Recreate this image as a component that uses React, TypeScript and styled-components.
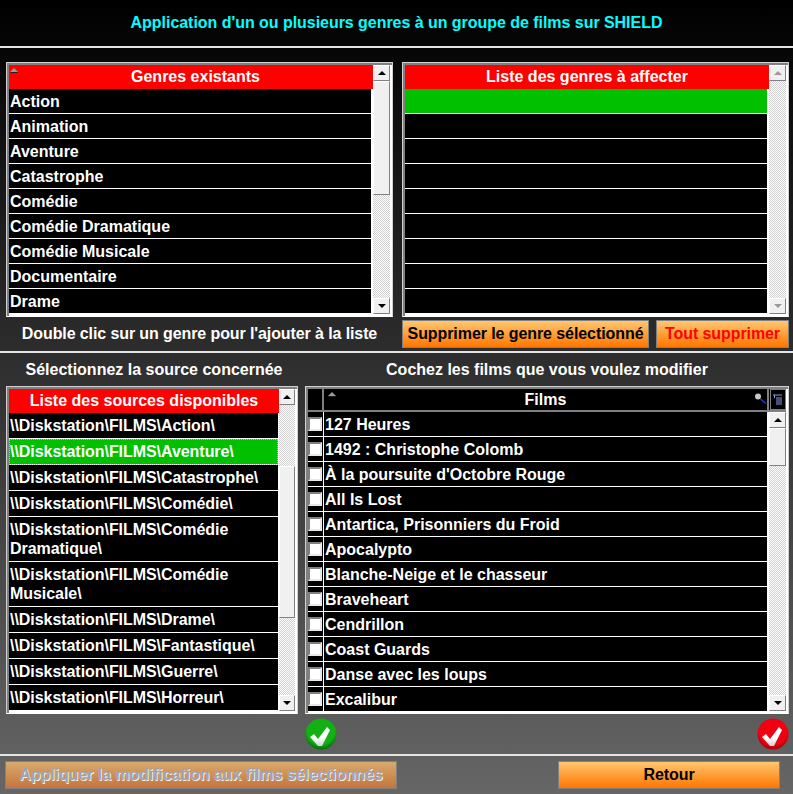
import * as React from 'react';
import styled, { createGlobalStyle } from 'styled-components';

const GlobalStyle = createGlobalStyle`
  html, body {
    margin: 0;
    padding: 0;
    background: #000;
  }
  * {
    box-sizing: border-box;
  }
`;

const Page = styled.div`
  width: 793px;
  height: 794px;
  overflow: hidden;
  background: linear-gradient(to bottom, #000 0%, #666 100%);
  font-family: 'Liberation Sans', Arial, sans-serif;
  font-weight: bold;
  font-size: 16px;
  color: #fff;
`;

const Title = styled.div`
  height: 46px;
  display: flex;
  align-items: center;
  justify-content: center;
  color: #00ffff;
  letter-spacing: -0.04px;
`;

const Rule = styled.div`
  height: 2px;
  background: #e4e4e4;
`;

const TopGrid = styled.div`
  display: grid;
  grid-template-columns: 387px 387px;
  column-gap: 9px;
  padding: 14px 0 0 6px;
`;

const ListBox = styled.div<{ $height: number }>`
  height: ${(p) => p.$height}px;
  display: flex;
  flex-direction: column;
  padding: 2px;
  background: #fff;
  border: 1px solid;
  border-color: #d0d0d0 #d0d0d0 #fff #d0d0d0;
  box-shadow: inset 2px 2px 0 #808080, inset -2px -2px 0 #fff;
`;

const ListBody = styled.div`
  flex: 1;
  display: flex;
  min-height: 0;
`;

const ListColumn = styled.div<{ $width: number }>`
  flex: 0 0 ${(p) => p.$width}px;
  display: flex;
  flex-direction: column;
  overflow: hidden;
  background: #fff;
`;

const ListHeader = styled.div<{ $shift?: number }>`
  position: relative;
  flex: 0 0 24px;
  display: flex;
  align-items: center;
  justify-content: center;
  padding-left: ${(p) => p.$shift ?? 0}px;
  background: #ff0000;
`;

const SortMark = styled.span<{ $left: number }>`
  position: absolute;
  left: ${(p) => p.$left}px;
  top: 3px;
  width: 0;
  height: 0;
  border-left: 4px solid transparent;
  border-right: 4px solid transparent;
  border-bottom: 4px solid #999;
  filter: drop-shadow(0 1px 0 #222);
`;

const GenreRow = styled.div<{ $selected?: boolean }>`
  flex: 0 0 25px;
  margin-right: 2px;
  padding: 2px 0 0 1px;
  display: flex;
  align-items: center;
  border-bottom: 1px solid #fff;
  background: ${(p) => (p.$selected ? '#00c000' : '#000')};
`;

const SourceRow = styled.div<{ $selected?: boolean }>`
  flex: 0 0 auto;
  margin-right: 1px;
  padding: 3px 0 3px 1px;
  line-height: 19px;
  letter-spacing: -0.05px;
  border-bottom: 1px solid #fff;
  background: ${(p) => (p.$selected ? '#00c000' : '#000')};
  outline: ${(p) => (p.$selected ? '1px dotted #d8a8e8' : 'none')};
  outline-offset: -1px;
`;

const ScrollBar = styled.div`
  flex: 1;
  display: flex;
  flex-direction: column;
  background: #fff;
`;

const ScrollButton = styled.div`
  flex: 0 0 16px;
  display: flex;
  align-items: center;
  justify-content: center;
  background: #f0f0f0;
  border: 1px solid;
  border-color: #fff #808080 #808080 #fff;
`;

const Arrow = styled.span<{ $down?: boolean; $off?: boolean }>`
  width: 0;
  height: 0;
  border-left: 4px solid transparent;
  border-right: 4px solid transparent;
  ${(p) => (p.$down ? 'border-top' : 'border-bottom')}: 4px solid ${(p) => (p.$off ? '#9a9a9a' : '#000')};
`;

const Track = styled.div<{ $height?: number }>`
  flex: ${(p) => (p.$height === undefined ? '1' : `0 0 ${p.$height}px`)};
  background: repeating-conic-gradient(#ffffff 0 25%, #d0d0d0 0 50%) 0 0 / 2px 2px;
`;

const Thumb = styled.div<{ $height: number }>`
  flex: 0 0 ${(p) => p.$height}px;
  background: #f0f0f0;
  border: 1px solid;
  border-color: #fff #808080 #808080 #fff;
`;

const ActionGrid = styled.div`
  display: grid;
  grid-template-columns: 387px 387px;
  column-gap: 9px;
  align-items: center;
  height: 34px;
  padding-left: 6px;
`;

const Hint = styled.div`
  text-align: center;
  letter-spacing: -0.1px;
`;

const ActionGroup = styled.div`
  display: flex;
  gap: 7px;
`;

const OrangeButton = styled.button<{ $width: number; $red?: boolean }>`
  width: ${(p) => p.$width}px;
  height: 28px;
  padding: 0;
  font: inherit;
  letter-spacing: -0.08px;
  color: ${(p) => (p.$red ? '#ff0000' : '#000')};
  background: linear-gradient(to bottom, #ffc76f 0%, #ff7600 100%);
  border: 1px solid #808080;
`;

const MutedButton = styled(OrangeButton)`
  color: #9da2b4;
  text-shadow: 1px 1px 0 #f2f2f2;
  background: linear-gradient(to bottom, #d8a96f 0%, #c4753c 100%);
`;

const LowerGrid = styled.div`
  display: grid;
  grid-template-columns: 292px 484px;
  column-gap: 7px;
  padding-left: 6px;
`;

const SectionLabel = styled.div<{ $shift?: number }>`
  height: 33px;
  display: flex;
  align-items: center;
  justify-content: center;
  padding-left: ${(p) => p.$shift ?? 0}px;
`;

const FilmHead = styled.div`
  flex: 0 0 23px;
  display: flex;
  background: #808080;
  padding-bottom: 2px;
`;

const HeadBlank = styled.div`
  flex: 0 0 14px;
  margin-right: 2px;
  background: #000;
`;

const HeadFilms = styled.div`
  position: relative;
  flex: 1;
  display: flex;
  align-items: center;
  justify-content: center;
  background: #000;
`;

const HeadMagnifier = styled.svg`
  position: absolute;
  right: 0;
  top: 4px;
`;

const HeadGap = styled.div`
  flex: 0 0 3px;
  background: #000;
  border-left: 2px solid #808080;
`;

const HeadColumns = styled.div`
  flex: 0 0 16px;
  display: flex;
  align-items: center;
  justify-content: center;
  background: #000;
  border: 1px solid #808080;
`;

const FilmBody = styled.div`
  flex: 1;
  display: flex;
  min-height: 0;
`;

const FilmRow = styled.div`
  flex: 0 0 25px;
  margin-right: 2px;
  display: flex;
  align-items: stretch;
  border-bottom: 1px solid #fff;
  background: #000;
`;

const CheckCell = styled.div`
  flex: 0 0 16px;
  display: flex;
  align-items: center;
  border-right: 1px solid #fff;
`;

const CheckBox = styled.span`
  width: 14px;
  height: 14px;
  background: #fff;
  border: 2px solid;
  border-color: #808080 #e8e8e8 #e8e8e8 #808080;
`;

const FilmName = styled.div`
  display: flex;
  align-items: center;
  padding: 2px 0 0 1px;
`;

const IconRow = styled.div`
  height: 40px;
  display: flex;
  justify-content: space-between;
  padding: 4px 4px 0 305px;
`;

const FooterBar = styled.div`
  display: flex;
  justify-content: space-between;
  padding: 5px 13px 0 5px;
`;

const GENRES = [
  'Action',
  'Animation',
  'Aventure',
  'Catastrophe',
  'Comédie',
  'Comédie Dramatique',
  'Comédie Musicale',
  'Documentaire',
  'Drame',
];

const SOURCES = [
  'Action',
  'Aventure',
  'Catastrophe',
  'Comédie',
  'Comédie Dramatique',
  'Comédie Musicale',
  'Drame',
  'Fantastique',
  'Guerre',
  'Horreur',
];

const FILMS = [
  '127 Heures',
  '1492 : Christophe Colomb',
  "À la poursuite d'Octobre Rouge",
  'All Is Lost',
  'Antartica, Prisonniers du Froid',
  'Apocalypto',
  'Blanche-Neige et le chasseur',
  'Braveheart',
  'Cendrillon',
  'Coast Guards',
  'Danse avec les loups',
  'Excalibur',
];

const Bullet = ({ id, light, dark }: { id: string; light: string; dark: string }) => (
  <svg width="32" height="32" viewBox="0 0 32 32">
    <defs>
      <radialGradient id={id} cx="50%" cy="38%" r="65%">
        <stop offset="0%" stopColor={light} />
        <stop offset="70%" stopColor={light} />
        <stop offset="100%" stopColor={dark} />
      </radialGradient>
      <linearGradient id={`${id}Tick`} x1="0" y1="0" x2="0" y2="1">
        <stop offset="55%" stopColor="#fff" />
        <stop offset="100%" stopColor="#d0d0d0" />
      </linearGradient>
    </defs>
    <circle cx="16" cy="16" r="15.5" fill={`url(#${id})`} />
    <path d="M5 19 L9 16 L13 21 L22 9 L25 12 L17 28 L13 28 Z" fill={`url(#${id}Tick)`} />
  </svg>
);

const Scroll = ({ before, thumb, off }: { before?: number; thumb?: number; off?: boolean }) => (
  <ScrollBar>
    <ScrollButton>
      <Arrow $off={off} />
    </ScrollButton>
    {thumb !== undefined && (
      <>
        {before !== undefined && before > 0 && <Track $height={before} />}
        <Thumb $height={thumb} />
      </>
    )}
    <Track />
    <ScrollButton>
      <Arrow $down $off={off} />
    </ScrollButton>
  </ScrollBar>
);

const App = () => (
  <Page>
    <GlobalStyle />
    <Title>Application d'un ou plusieurs genres à un groupe de films sur SHIELD</Title>
    <Rule />

    <TopGrid>
      <ListBox $height={255}>
        <ListBody>
          <ListColumn $width={364}>
            <ListHeader $shift={9}>
              <SortMark $left={1} />
              Genres existants
            </ListHeader>
            {GENRES.map((g) => (
              <GenreRow key={g}>{g}</GenreRow>
            ))}
          </ListColumn>
          <Scroll thumb={114} />
        </ListBody>
      </ListBox>
      <ListBox $height={255}>
        <ListBody>
          <ListColumn $width={364}>
            <ListHeader>Liste des genres à affecter</ListHeader>
            {Array.from({ length: 9 }, (_, i) => (
              <GenreRow key={i} $selected={i === 0} />
            ))}
          </ListColumn>
          <Scroll off />
        </ListBody>
      </ListBox>
    </TopGrid>

    <ActionGrid>
      <Hint>Double clic sur un genre pour l'ajouter à la liste</Hint>
      <ActionGroup>
        <OrangeButton $width={247}>Supprimer le genre sélectionné</OrangeButton>
        <OrangeButton $width={133} $red>
          Tout supprimer
        </OrangeButton>
      </ActionGroup>
    </ActionGrid>
    <Rule />

    <LowerGrid>
      <div>
        <SectionLabel $shift={4}>Sélectionnez la source concernée</SectionLabel>
        <ListBox $height={328}>
          <ListBody>
            <ListColumn $width={270}>
              <ListHeader>Liste des sources disponibles</ListHeader>
              {SOURCES.map((s, i) => (
                <SourceRow key={s} $selected={i === 1}>
                  {`\\\\Diskstation\\FILMS\\${s}\\`}
                </SourceRow>
              ))}
            </ListColumn>
            <Scroll before={61} thumb={152} />
          </ListBody>
        </ListBox>
      </div>
      <div>
        <SectionLabel>Cochez les films que vous voulez modifier</SectionLabel>
        <ListBox $height={328}>
          <FilmHead>
            <HeadBlank />
            <HeadFilms>
              <SortMark $left={4} />
              Films
              <HeadMagnifier width="12" height="12" viewBox="0 0 12 12">
                <circle cx="3" cy="3.5" r="3" fill="#c8c8c8" />
                <path d="M5.5 6 L11 10.5" stroke="#2030e0" strokeWidth="1.6" />
              </HeadMagnifier>
            </HeadFilms>
            <HeadGap />
            <HeadColumns>
              <svg width="10" height="11" viewBox="0 0 10 11">
                <path d="M0 1 H9 M3 4 H9 M3 6 H9 M3 8 H9 M3 10 H9" stroke="#8c9cf0" strokeWidth="1.2" />
                <path d="M1.5 1 V4" stroke="#8c9cf0" strokeWidth="1" />
              </svg>
            </HeadColumns>
          </FilmHead>
          <FilmBody>
            <ListColumn $width={461}>
              {FILMS.map((f) => (
                <FilmRow key={f}>
                  <CheckCell>
                    <CheckBox />
                  </CheckCell>
                  <FilmName>{f}</FilmName>
                </FilmRow>
              ))}
            </ListColumn>
            <Scroll thumb={38} />
          </FilmBody>
        </ListBox>
      </div>
    </LowerGrid>

    <IconRow>
      <Bullet id="okGreen" light="#12b012" dark="#005f00" />
      <Bullet id="okRed" light="#f00010" dark="#980000" />
    </IconRow>
    <Rule />
    <FooterBar>
      <MutedButton $width={392}>Appliquer la modification aux films sélectionnés</MutedButton>
      <OrangeButton $width={222}>Retour</OrangeButton>
    </FooterBar>
  </Page>
);

export default App;
